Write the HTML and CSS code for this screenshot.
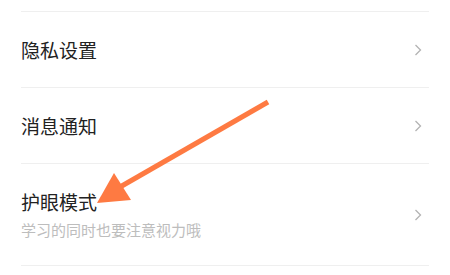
FILE: index.html
```html
<!DOCTYPE html>
<html lang="zh">
<head>
<meta charset="utf-8">
<link rel="stylesheet" href="styles.css">
</head>
<body>
<div class="page">
  <div class="list">
    <div class="item">
      <div class="text"><div class="title">隐私设置</div></div>
      <svg class="chev" width="8" height="12" viewBox="0 0 8 12"><polyline points="1.5,1 6.5,6 1.5,11" fill="none" stroke="#b3b3b3" stroke-width="1.3"/></svg>
    </div>
    <div class="item">
      <div class="text"><div class="title">消息通知</div></div>
      <svg class="chev" width="8" height="12" viewBox="0 0 8 12"><polyline points="1.5,1 6.5,6 1.5,11" fill="none" stroke="#b3b3b3" stroke-width="1.3"/></svg>
    </div>
    <div class="item tall">
      <div class="text">
        <div class="title">护眼模式</div>
        <div class="sub">学习的同时也要注意视力哦</div>
      </div>
      <svg class="chev" width="8" height="12" viewBox="0 0 8 12"><polyline points="1.5,1 6.5,6 1.5,11" fill="none" stroke="#b3b3b3" stroke-width="1.3"/></svg>
    </div>
  </div>
  <svg class="arrow" width="450" height="275" viewBox="0 0 450 275">
    <line x1="268" y1="102" x2="120" y2="187" stroke="#fe7a42" stroke-width="5"/>
    <polygon points="97,203 114,173 131,200" fill="#fe7a42"/>
  </svg>
</div>
</body>
</html>
```

FILE: styles.css
```css
html, body {
  margin: 0;
  padding: 0;
  background: #ffffff;
}
.page {
  position: relative;
  width: 450px;
  height: 275px;
  overflow: hidden;
  font-family: "Noto Sans CJK SC", "Noto Sans", sans-serif;
}
.list {
  padding: 11px 21px 0 21px;
}
.item {
  display: flex;
  align-items: center;
  justify-content: space-between;
  height: 75px;
  border-top: 1px solid #efefef;
}
.item.tall {
  height: 101px;
  border-bottom: 1px solid #efefef;
}
.text {
  display: flex;
  flex-direction: column;
}
.title {
  font-size: 19px;
  line-height: 26px;
  color: #222222;
}
.sub {
  font-size: 15px;
  line-height: 20px;
  color: #bdbdbd;
  margin-top: 5px;
}
.chev {
  margin-right: 7px;
}
.arrow {
  position: absolute;
  left: 0;
  top: 0;
}
```
